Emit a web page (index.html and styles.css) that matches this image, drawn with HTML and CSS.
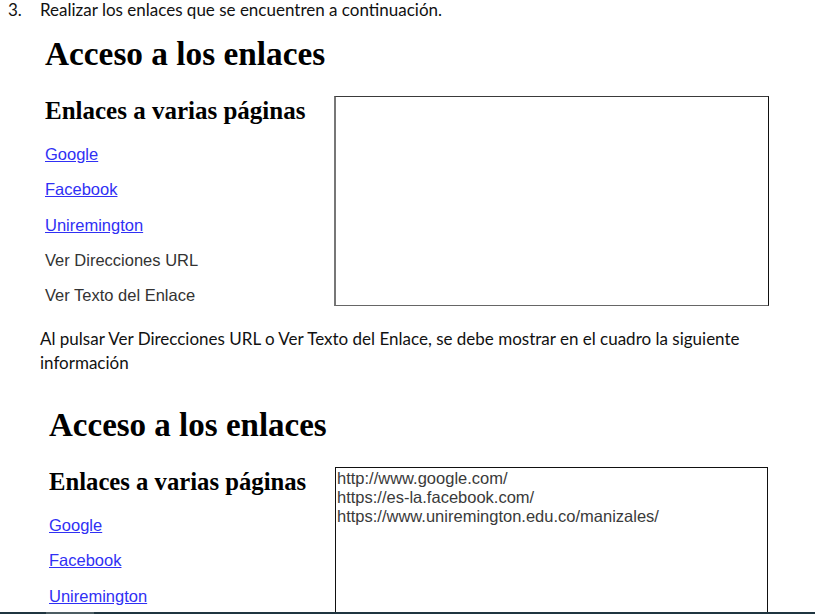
FILE: index.html
```html
<!DOCTYPE html>
<html lang="es">
<head>
<meta charset="utf-8">
<title>Acceso a los enlaces</title>
<link rel="stylesheet" href="styles.css">
</head>
<body>
<div class="page">
  <div class="task"><span class="num">3.</span><span class="task-text">Realizar los enlaces que se encuentren a continuación.</span></div>

  <section class="shot shot-one">
    <h1 class="title">Acceso a los enlaces</h1>
    <div class="row">
      <div class="links">
        <h2 class="subtitle">Enlaces a varias páginas</h2>
        <p class="item"><a class="link" href="#">Google</a></p>
        <p class="item"><a class="link" href="#">Facebook</a></p>
        <p class="item"><a class="link" href="#">Uniremington</a></p>
        <p class="item plain">Ver Direcciones URL</p>
        <p class="item plain">Ver Texto del Enlace</p>
      </div>
      <div class="box box-empty"></div>
    </div>
  </section>

  <p class="note">Al pulsar Ver Direcciones URL o Ver Texto del Enlace, se debe mostrar en el cuadro la siguiente información</p>

  <section class="shot shot-two">
    <h1 class="title">Acceso a los enlaces</h1>
    <div class="row">
      <div class="links">
        <h2 class="subtitle">Enlaces a varias páginas</h2>
        <p class="item"><a class="link" href="#">Google</a></p>
        <p class="item"><a class="link" href="#">Facebook</a></p>
        <p class="item"><a class="link" href="#">Uniremington</a></p>
      </div>
      <div class="box box-filled">
        <div class="url">http://www.google.com/</div>
        <div class="url">https://es-la.facebook.com/</div>
        <div class="url">https://www.uniremington.edu.co/manizales/</div>
      </div>
    </div>
  </section>
</div>
<div class="taskbar"><span class="taskbar-seg"></span></div>
</body>
</html>
```

FILE: styles.css
```css
html, body {
  margin: 0;
  padding: 0;
  background: #ffffff;
}
body {
  height: 614px;
  overflow: hidden;
}
.page {
  font-family: "Lato", "Liberation Sans", sans-serif;
  color: #111;
}
.task {
  display: flex;
  font-size: 17px;
  line-height: 20px;
  height: 20px;
}
.num {
  width: 32px;
  padding-left: 8px;
}
.shot {
  display: flex;
  flex-direction: column;
}
.shot-one {
  padding-left: 45px;
}
.shot-two {
  padding-left: 49px;
}
.title {
  font-family: "Liberation Serif", "Times New Roman", serif;
  font-weight: bold;
  font-size: 33.3px;
  line-height: 38px;
  margin: 15px 0 0;
  color: #000;
}
.shot-two .title {
  font-size: 33px;
  margin-top: 31px;
}
.row {
  display: flex;
  align-items: flex-start;
  margin-top: 23px;
}
.links {
  display: flex;
  flex-direction: column;
  width: 289px;
  flex: none;
}
.shot-two .links {
  width: 286px;
}
.subtitle {
  font-family: "Liberation Serif", "Times New Roman", serif;
  font-weight: bold;
  font-size: 25px;
  line-height: 29px;
  margin: 0 0 20px;
  color: #000;
}
.shot-two .subtitle {
  font-size: 24.7px;
}
.item {
  font-family: "Liberation Sans", Arial, sans-serif;
  font-size: 16.5px;
  line-height: 18.5px;
  margin: 0 0 16.8px;
  color: #333;
}
.item:last-child {
  margin-bottom: 0;
}
.link {
  color: #3030f4;
  text-decoration: underline;
}
.box {
  box-sizing: border-box;
  flex: none;
}
.box-empty {
  width: 435px;
  height: 210px;
  border-style: solid;
  border-width: 1px 1px 1px 2px;
  border-color: #3a3a3a #111 #666 #777;
}
.box-filled {
  width: 433px;
  height: 200px;
  border: 1px solid #111;
  padding: 1px;
}
.url {
  font-family: "Liberation Sans", Arial, sans-serif;
  font-size: 16.5px;
  line-height: 19px;
  color: #3a3a3a;
}
.note {
  margin: 21px 0 0;
  padding-left: 40px;
  width: 745px;
  font-size: 17px;
  line-height: 24px;
}
.taskbar {
  position: fixed;
  left: 0;
  right: 0;
  bottom: 0;
  height: 2px;
  background: #1f3540;
}
.taskbar-seg {
  position: absolute;
  left: 46px;
  width: 48px;
  top: 0;
  bottom: 0;
  background: #4c5d63;
}
```
